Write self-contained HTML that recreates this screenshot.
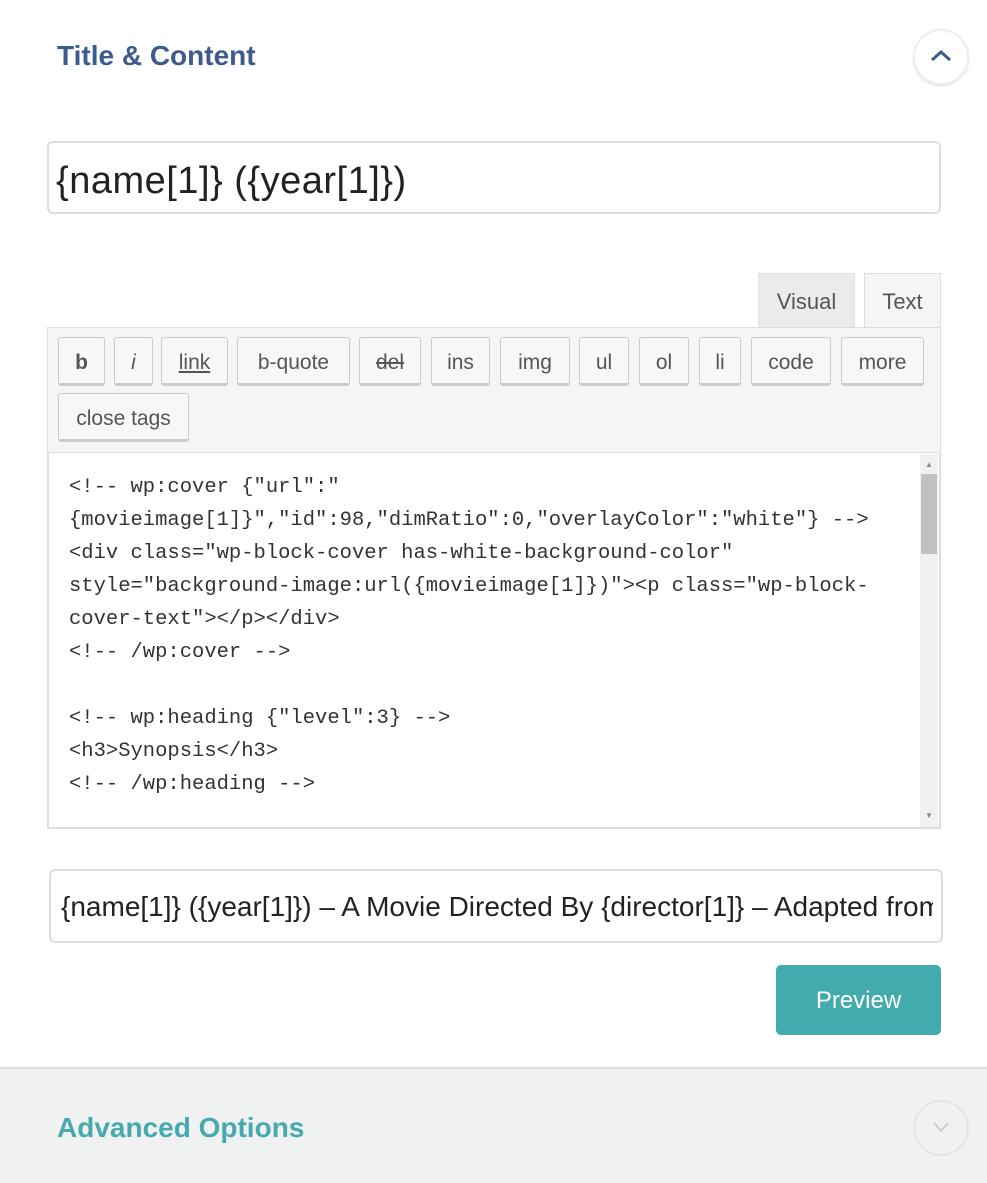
<!DOCTYPE html>
<html><head><meta charset="utf-8"><style>
*{margin:0;padding:0;box-sizing:border-box}
body{width:987px;height:1183px;background:#fff;position:relative;overflow:hidden;font-family:"Liberation Sans",sans-serif;color:#32373c}
.a{position:absolute}
.btn{position:absolute;top:337px;height:49px;border:1px solid #ccc;border-bottom:3px solid #ccc;border-radius:3px;background:#f7f7f7;font-size:21px;color:#555;text-align:center;line-height:50px}
.code{position:absolute;left:69px;top:471px;font-family:"Liberation Mono",monospace;font-size:20.5px;line-height:33px;color:#333;white-space:pre}
</style></head><body>
<div class="a" style="left:57px;top:40px;font-size:28px;color:#3d5b8f;font-weight:600">Title &amp; Content</div>
<div class="a" style="left:913px;top:29px;width:56px;height:56px;border:2px solid #eee;border-radius:50%;box-shadow:0 1px 2px #ddd"></div>
<svg class="a" style="left:929px;top:48px" width="24" height="16"><path d="M3 12 L12 4 L21 12" stroke="#3d5b8f" stroke-width="3" fill="none"/></svg>
<div class="a" style="left:47px;top:141px;width:894px;height:73px;border:2px solid #ddd;border-radius:6px"></div>
<div class="a" style="left:56px;top:160px;font-size:38px;color:#222;letter-spacing:0.5px">{name[1]} ({year[1]})</div>
<div class="a" style="left:758px;top:273px;width:97px;height:55px;background:#ebebeb;border:1px solid #e2e2e2;font-size:22px;color:#555;text-align:center;line-height:56px">Visual</div>
<div class="a" style="left:864px;top:273px;width:77px;height:56px;background:#f5f5f5;border:1px solid #ddd;border-bottom:none;font-size:22px;color:#555;text-align:center;line-height:56px">Text</div>
<div class="a" style="left:47px;top:327px;width:894px;height:126px;background:#f5f5f5;border:1px solid #ddd"></div>
<div class="btn" style="left:58px;width:47px;font-weight:bold">b</div>
<div class="btn" style="left:114px;width:39px;font-style:italic">i</div>
<div class="btn" style="left:161px;width:67px;text-decoration:underline">link</div>
<div class="btn" style="left:237px;width:113px">b-quote</div>
<div class="btn" style="left:359px;width:62px;text-decoration:line-through">del</div>
<div class="btn" style="left:431px;width:59px">ins</div>
<div class="btn" style="left:500px;width:70px">img</div>
<div class="btn" style="left:579px;width:50px">ul</div>
<div class="btn" style="left:639px;width:50px">ol</div>
<div class="btn" style="left:699px;width:42px">li</div>
<div class="btn" style="left:751px;width:80px">code</div>
<div class="btn" style="left:841px;width:83px">more</div>
<div class="btn" style="left:58px;top:393px;width:131px">close tags</div>
<div class="a" style="left:47px;top:452px;width:894px;height:377px;border:2px solid #ddd;border-top:1px solid #ddd;background:#fff"></div>
<div class="a" style="left:920px;top:454px;width:18px;height:373px;background:#f1f1f1"></div>
<div class="a" style="left:921px;top:474px;width:16px;height:80px;background:#c1c1c1"></div>
<div class="a" style="left:925px;top:460px;font-size:8px;color:#888">▲</div>
<div class="a" style="left:925px;top:811px;font-size:8px;color:#888">▼</div>
<div class="code">&lt;!-- wp:cover {"url":"
{movieimage[1]}","id":98,"dimRatio":0,"overlayColor":"white"} --&gt;
&lt;div class="wp-block-cover has-white-background-color"
style="background-image:url({movieimage[1]})"&gt;&lt;p class="wp-block-
cover-text"&gt;&lt;/p&gt;&lt;/div&gt;
&lt;!-- /wp:cover --&gt;

&lt;!-- wp:heading {"level":3} --&gt;
&lt;h3&gt;Synopsis&lt;/h3&gt;
&lt;!-- /wp:heading --&gt;</div>
<div class="a" style="left:49px;top:869px;width:894px;height:74px;border:2px solid #ddd;border-radius:6px;overflow:hidden">
<div style="position:absolute;left:10px;top:20px;width:872px;overflow:hidden;font-size:28px;color:#222;white-space:nowrap">{name[1]} ({year[1]}) – A Movie Directed By {director[1]} – Adapted from</div></div>
<div class="a" style="left:776px;top:965px;width:165px;height:70px;background:#42abad;border-radius:5px;color:#fff;font-size:24px;text-align:center;line-height:72px">Preview</div>
<div class="a" style="left:0;top:1067px;width:987px;height:116px;background:#f0f1f1;border-top:2px solid #ddd"></div>
<div class="a" style="left:57px;top:1112px;font-size:28px;color:#45a9ad;font-weight:600">Advanced Options</div>
<div class="a" style="left:913px;top:1100px;width:56px;height:56px;border:2px solid #e4e4e4;border-radius:50%"></div>
<svg class="a" style="left:931px;top:1120px" width="20" height="14"><path d="M3 3 L10 11 L17 3" stroke="#ccc" stroke-width="2" fill="none"/></svg>
</body></html>
